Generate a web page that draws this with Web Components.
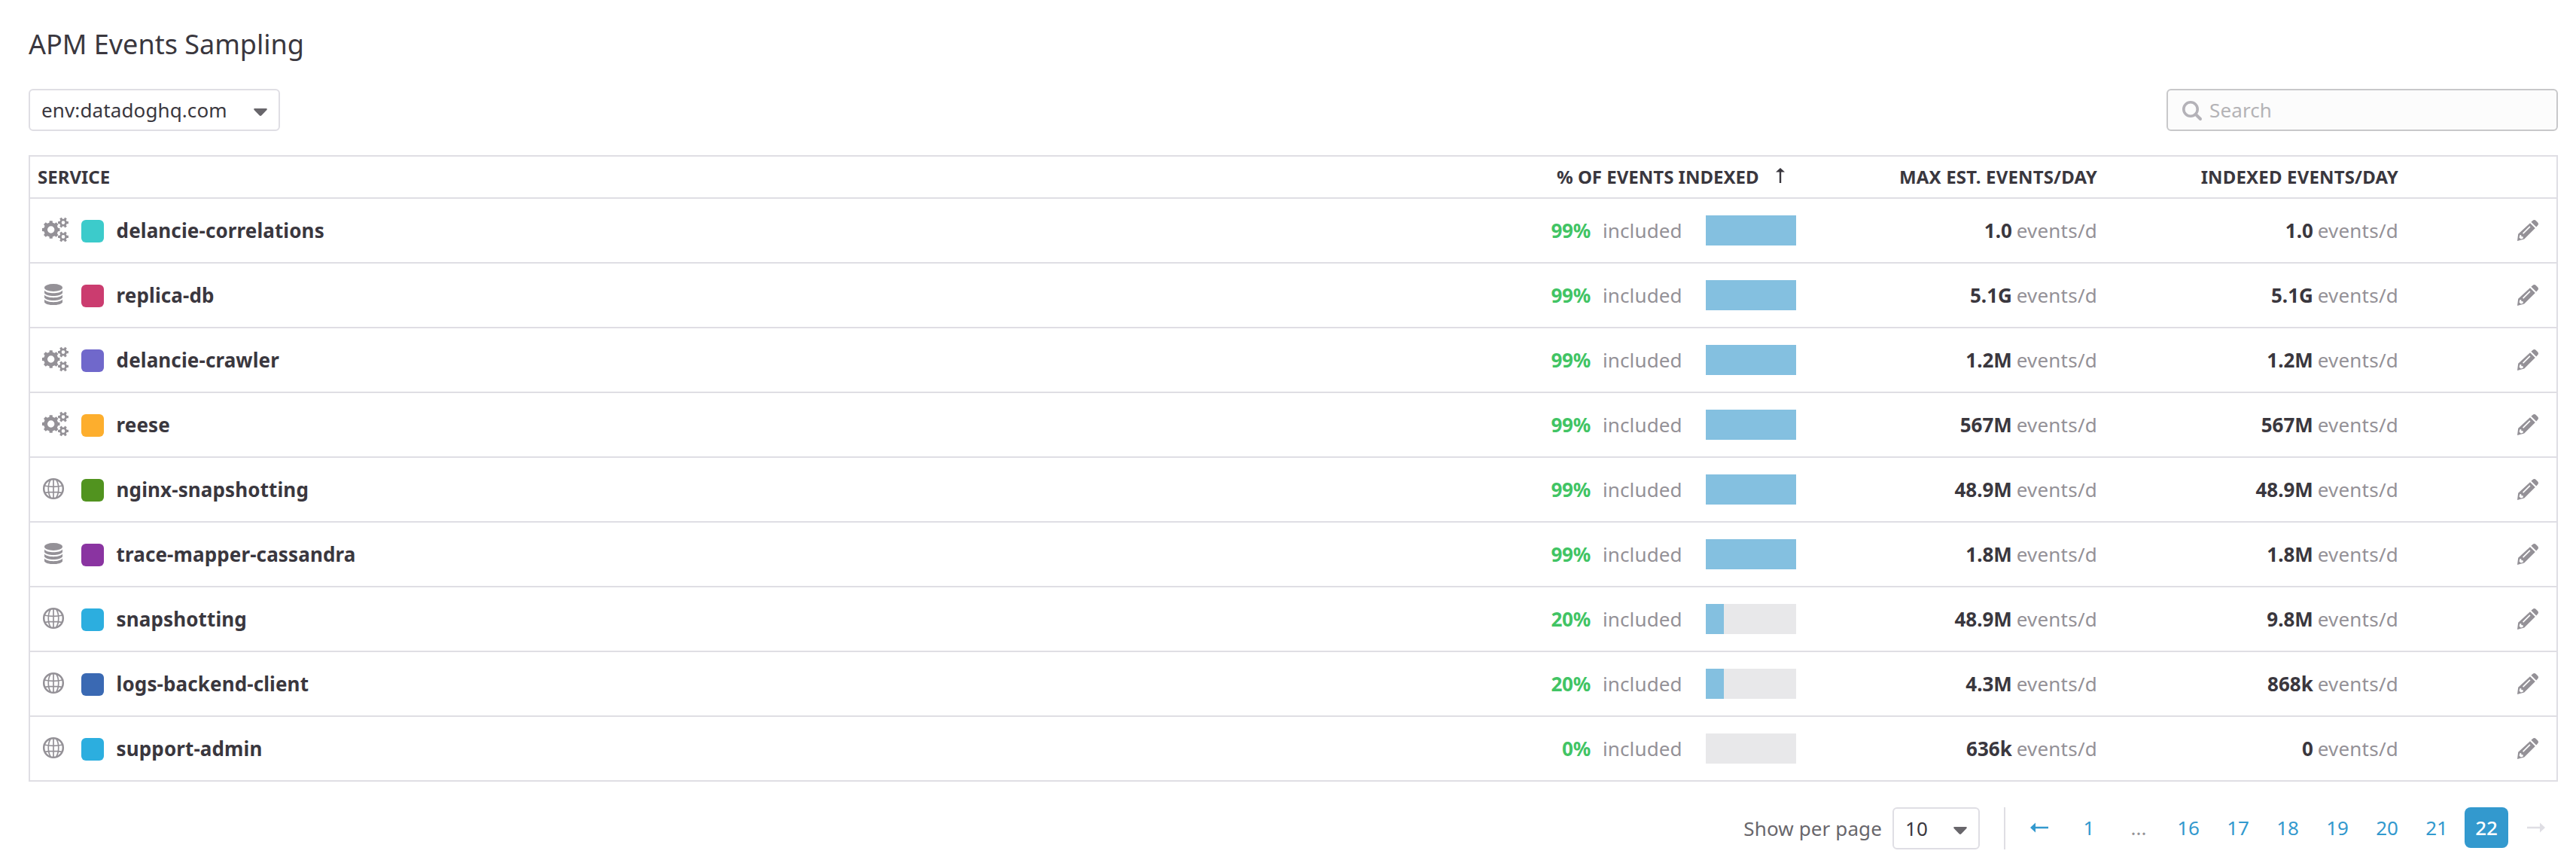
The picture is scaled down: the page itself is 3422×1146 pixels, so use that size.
<!DOCTYPE html>
<html lang="en">
<head>
<meta charset="utf-8">
<title>APM Events Sampling</title>
<style>
body{margin:0;background:#fff;font-family:"Noto Sans",sans-serif;font-size:26px;line-height:36px;letter-spacing:.12px;color:#3a373e;-webkit-font-smoothing:antialiased}
</style>
</head>
<body>
<sampling-page></sampling-page>
<script>
const ICONS = {
  gears: {w:35,h:32,svg:''},
  db: {w:24,h:28,svg:`<ellipse cx="12" cy="5" rx="12" ry="5"/><path d="M0 8.6C2 11.4 7 12.3 12 12.3S22 11.4 24 8.6V12.2C22.6 14.6 17.5 16 12 16S1.4 14.6 0 12.2Z"/><path d="M0 14.6C2 17.2 7 18.2 12 18.2S22 17.2 24 14.6V18.2C22.6 20.6 17.5 22 12 22S1.4 20.6 0 18.2Z"/><path d="M0 20.6C2 23.2 7 24.2 12 24.2S22 23.2 24 20.6V24.4C22.6 26.8 17.5 28 12 28S1.4 26.8 0 24.4Z"/>`},
  globe: {w:28,h:28,svg:`<g fill="none" stroke="currentColor"><circle cx="14" cy="14" r="12.8" stroke-width="2.5"/><g stroke-width="1.7"><path d="M14 1V27M1.8 10Q14 12.8 26.2 10M2.6 19.4Q14 17.4 25.4 19.4"/><path d="M10.4 2C6.2 8 6.2 20 10.4 26M17.6 2C21.8 8 21.8 20 17.6 26"/></g></g>`},
  pencil: {w:28,h:28,svg:`<path d="M18.4 2.8L25.2 9.6 27 7.6Q29 5.4 27 3.2L24.8 1Q22.6-1 20.4 1Z"/><path fill-rule="evenodd" d="M17 4.2L23.8 11 9.2 25.6 0 28 1.2 18.8ZM16.3 8.2L7 17.5 8.2 18.7 17.5 9.4ZM3.4 20.2L2.6 23.4 4.8 25.4 7.8 24.4 7.6 22.3 5.4 22.1 5.2 19.9Z"/>`},
  search: {w:26,h:26,svg:`<g fill="none" stroke="currentColor"><circle cx="11" cy="11" r="9.2" stroke-width="3.6"/><path d="M18 18L24 24" stroke-width="4" stroke-linecap="round"/></g>`},
  caret: {w:18,h:10,svg:`<path d="M1 0H17Q18.6.6 17.4 2L10.4 9.2Q9 10.6 7.6 9.2L.6 2Q-.6.6 1 0Z"/>`},
  left: {w:24,h:14,svg:`<path d="M0 7L7 .4V5.7H24V8.3H7V13.6Z"/>`},
  right: {w:24,h:14,svg:`<path d="M24 7L17 .4V5.7H0V8.3H17V13.6Z"/>`},
  up: {w:12,h:20,svg:`<path d="M6 0L12 5.6H7.2V20H4.8V5.6H0Z"/>`}
};
// Builds a cog outline with square teeth and a round hole.
function cog(cx, cy, n, outer, root, hole, turn) {
  const p = [], step = 2 * Math.PI / n;
  for (let i = 0; i < n; i++) {
    const a = turn + i * step;
    for (const [r, k] of [[root, -.3], [outer, -.21], [outer, .21], [root, .3]])
      p.push((cx + r * Math.cos(a + k * step)).toFixed(2) + ' ' + (cy + r * Math.sin(a + k * step)).toFixed(2));
  }
  return `M${p.join('L')}ZM${cx - hole} ${cy}a${hole} ${hole} 0 1 0 ${2 * hole} 0a${hole} ${hole} 0 1 0 ${-2 * hole} 0Z`;
}
ICONS.gears.svg = `<path fill-rule="evenodd" d="${cog(11.7, 16, 8, 11.9, 9.6, 4.7, 0)}${cog(28, 6.6, 6, 7.1, 5, 2.3, 0)}${cog(28, 25.4, 6, 7.1, 5, 2.3, 0)}"/>`;

class BaseElement extends HTMLElement {
  connectedCallback() {
    if (!this.shadowRoot) this.attachShadow({mode: 'open'}).innerHTML =
      `<style>*{box-sizing:border-box}${this.css()}</style>${this.html()}`;
  }
  at(n) { return this.getAttribute(n); }
}
customElements.define('ui-icon', class extends BaseElement {
  css() { return ':host{display:block;flex:none}svg{display:block;overflow:visible}'; }
  html() { const i = ICONS[this.at('name')]; return `<svg width="${i.w}" height="${i.h}" viewBox="0 0 ${i.w} ${i.h}" fill="currentColor">${i.svg}</svg>`; }
});
customElements.define('select-box', class extends BaseElement {
  css() { return `:host{box-sizing:border-box;display:flex;align-items:center;justify-content:space-between;height:56px;border:2px solid #dfdee4;border-radius:6px;padding:0 15px;background:#fff}
    ui-icon{color:#68666b;margin-top:6px}`; }
  html() { return '<span><slot></slot></span><ui-icon name="caret"></ui-icon>'; }
});
customElements.define('search-box', class extends BaseElement {
  css() { return `:host{box-sizing:border-box;display:flex;align-items:center;width:520px;height:56px;border:2px solid #c8c8ca;border-radius:6px;background:#fcfcfc;padding-left:19px;gap:10px;color:#b4b3b6}ui-icon{color:#b4b2b8;margin-top:2px}`; }
  html() { return '<ui-icon name="search"></ui-icon><span><slot></slot></span>'; }
});
customElements.define('share-bar', class extends BaseElement {
  css() { return `:host{display:block;width:120px;height:40px;background:#e8e8ea}div{height:100%;background:#84c0e0}`; }
  html() { return `<div style="width:${this.at('value')}%"></div>`; }
});
customElements.define('event-rate', class extends BaseElement {
  css() { return `:host{display:block;text-align:right;color:#949197;white-space:nowrap;letter-spacing:.22px;word-spacing:-1.2px}b{color:#3a373e;letter-spacing:0}`; }
  html() { return `<b>${this.at('amount')}</b> events/d`; }
});
const COLUMNS = 'box-sizing:border-box;display:grid;grid-template-columns:1fr 326px 400px 400px 210px;align-items:center;';
customElements.define('table-head', class extends BaseElement {
  css() { return `:host{${COLUMNS}height:56px;font-size:24px;font-weight:700;letter-spacing:0;border-bottom:2px solid #dfdee4}
    .s{padding-left:10px}.p{display:flex;gap:22px;padding-left:8px;white-space:nowrap}.r{text-align:right;letter-spacing:.16px}ui-icon{margin-top:6px}`; }
  html() { return `<div class="s">SERVICE</div><div class="p"><span>% OF EVENTS INDEXED</span><ui-icon name="up"></ui-icon></div><div class="r">MAX EST. EVENTS/DAY</div><div class="r">INDEXED EVENTS/DAY</div>`; }
});
customElements.define('service-row', class extends BaseElement {
  css() { return `:host{${COLUMNS}height:86px;border-bottom:2px solid #dfdee4}
    :host(:last-child){border-bottom:0;height:84px}
    .s{display:flex;align-items:center}.i{width:50px;margin:0 12px 2px 6px;display:flex;justify-content:center;color:#949197}
    ui-icon[name=gears]{margin-left:4px}
    i{width:30px;height:30px;border-radius:6px;margin-top:2px}.s b{margin-left:16.6px}
    .p{display:flex;align-items:center}.p b{width:53px;text-align:right;color:#41c464;letter-spacing:-.2px}.p span{margin-left:16px;color:#949197;flex:1}
    .e{display:flex;justify-content:flex-end;padding-right:24px;color:#949197}`; }
  html() { return `<div class="s"><div class="i"><ui-icon name="${this.at('icon')}"></ui-icon></div><i style="background:${this.at('color')}"></i><b>${this.at('name')}</b></div>
    <div class="p"><b>${this.at('share')}%</b><span>included</span><share-bar value="${this.at('bar')}"></share-bar></div>
    <event-rate amount="${this.at('max')}"></event-rate><event-rate amount="${this.at('indexed')}"></event-rate><div class="e"><ui-icon name="pencil"></ui-icon></div>`; }
});
customElements.define('page-nav', class extends BaseElement {
  css() { return `:host{display:flex;justify-content:flex-end;align-items:center;height:56px;color:#68666b}
    select-box{width:116px;margin-left:14px;color:#3a373e;white-space:nowrap}
    .bar{width:2px;height:56px;background:#dfdee4;margin:0 16px 0 32px}
    .pages{display:flex;gap:8px;height:56px;color:#3399ce;letter-spacing:0}
    .pages>*{width:58px;height:54px;display:flex;align-items:center;justify-content:center}
    .dots{color:#949197}.next{color:#dfdee4}.on{background:#3399ce;color:#fff;border-radius:8px;font-weight:500}`; }
  html() { return `<span>Show per page</span><select-box>10</select-box><div class="bar"></div><div class="pages"><div><ui-icon name="left"></ui-icon></div><div>1</div><div class="dots">...</div>${[16,17,18,19,20,21].map(n => `<div>${n}</div>`).join('')}<div class="on">22</div><div class="next"><ui-icon name="right"></ui-icon></div></div>`; }
});
const ROWS = [
  ['gears', '#3ccbcb', 'delancie-correlations', 99, '1.0', '1.0'],
  ['db', '#cb3c6f', 'replica-db', 99, '5.1G', '5.1G'],
  ['gears', '#7068cb', 'delancie-crawler', 99, '1.2M', '1.2M'],
  ['gears', '#fdae2d', 'reese', 99, '567M', '567M'],
  ['globe', '#51931f', 'nginx-snapshotting', 99, '48.9M', '48.9M'],
  ['db', '#8a34a1', 'trace-mapper-cassandra', 99, '1.8M', '1.8M'],
  ['globe', '#2caedf', 'snapshotting', 20, '48.9M', '9.8M'],
  ['globe', '#3a69b3', 'logs-backend-client', 20, '4.3M', '868k'],
  ['globe', '#2caedf', 'support-admin', 0, '636k', '0']
];
customElements.define('sampling-page', class extends BaseElement {
  css() { return `:host{box-sizing:border-box;display:block;height:1146px;padding:34px 24px 0 38px}
    h1{margin:0;font-size:36px;line-height:50px;font-weight:400;letter-spacing:0}
    .tools{display:flex;justify-content:space-between;margin-top:34px}
    .tools select-box{width:334px}
    .table{margin-top:32px;border:2px solid #dfdee4}
    page-nav{margin-top:34px}`; }
  html() { return `<h1>APM Events Sampling</h1><div class="tools"><select-box>env:datadoghq.com</select-box><search-box>Search</search-box></div>
    <div class="table"><table-head></table-head>${ROWS.map(r => `<service-row icon="${r[0]}" color="${r[1]}" name="${r[2]}" share="${r[3]}" bar="${r[3] === 99 ? 100 : r[3]}" max="${r[4]}" indexed="${r[5]}"></service-row>`).join('')}</div><page-nav></page-nav>`; }
});
</script>
</body>
</html>
